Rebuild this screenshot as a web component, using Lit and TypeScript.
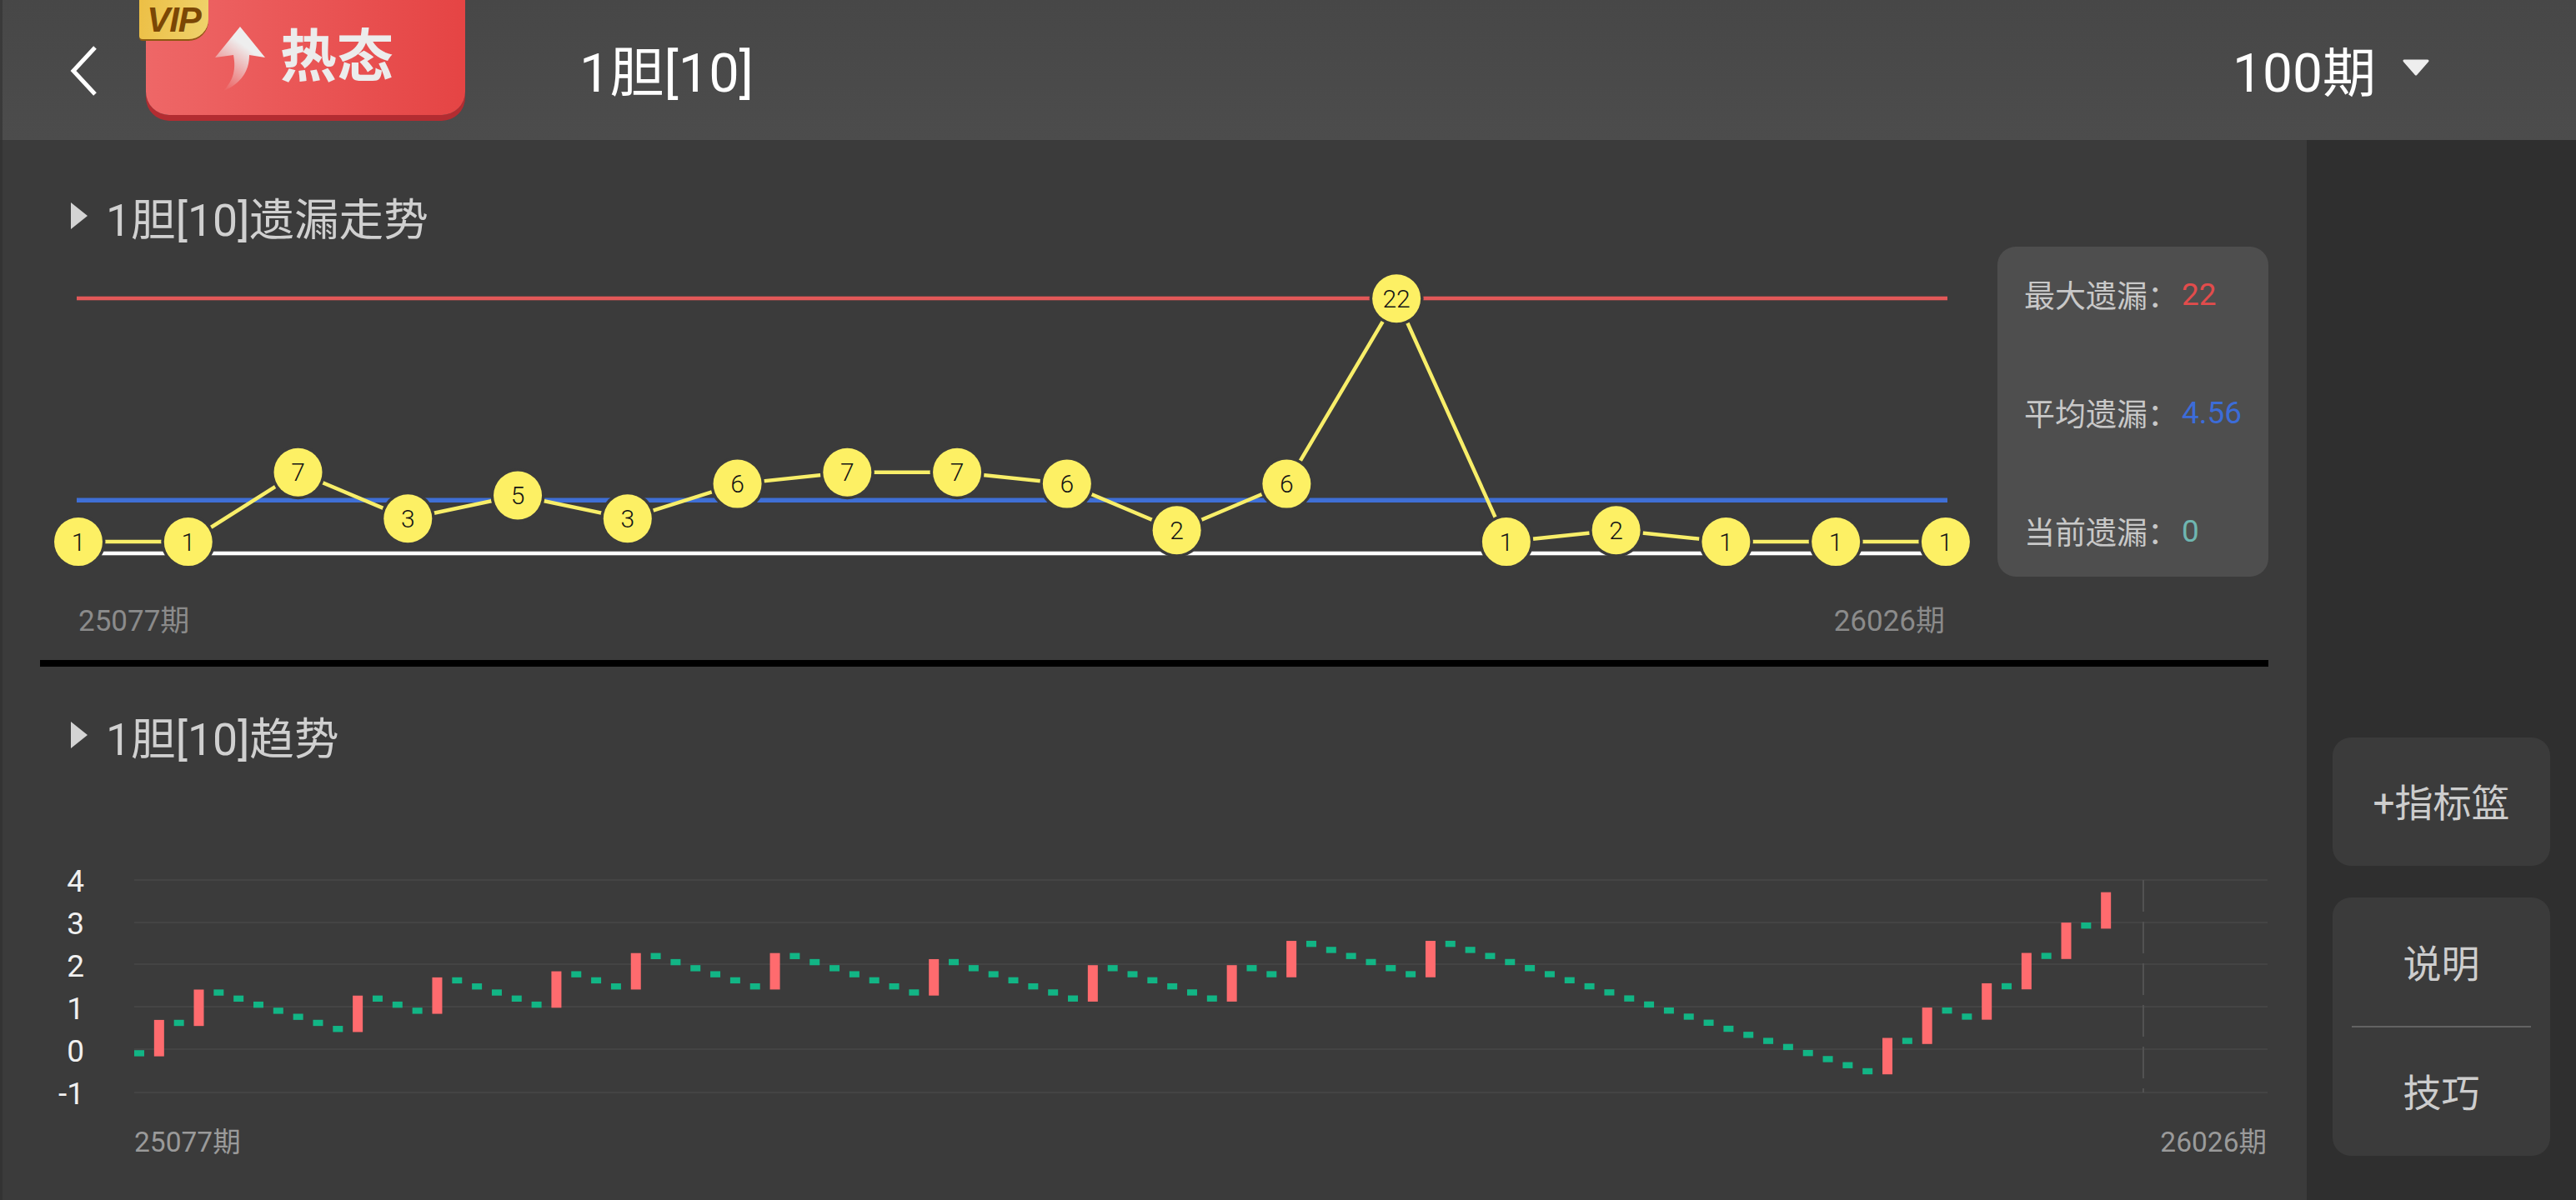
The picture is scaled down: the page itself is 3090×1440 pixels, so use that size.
import { LitElement, html, css, svg } from "lit";
import { customElement } from "lit/decorators.js";

const MISSES = [1, 1, 7, 3, 5, 3, 6, 7, 7, 6, 2, 6, 22, 1, 2, 1, 1, 1];
const HITS = [1, 3, 11, 15, 21, 25, 32, 40, 48, 55, 58, 65, 88, 90, 93, 95, 97, 99];
const nodeX = (i: number) => 94 + i * 131.76;
const nodeY = (v: number) => 664 - 13.9 * v;

function boxes() {
  const out: { x: number; y: number; h: number; hit: boolean }[] = [];
  let bottom = 1267.6;
  for (let i = 0; i < 100; i++) {
    const x = 167 + 23.83 * i;
    if (HITS.includes(i)) {
      out.push({ x, y: bottom - 43.7, h: 43.7, hit: true });
      bottom -= 43.7;
    } else {
      if (i > 0) bottom += 7.28;
      out.push({ x, y: bottom - 7.4, h: 7.4, hit: false });
    }
  }
  return out;
}

@customElement("app-root")
export class AppRoot extends LitElement {
  static styles = css`
    :host {
      display: block;
      width: 3090px;
      height: 1440px;
      overflow: hidden;
      background: #3b3b3b;
      font-family: Roboto, "Noto Sans CJK SC", sans-serif;
    }
    .header {
      height: 168px;
      display: flex;
      align-items: flex-start;
      box-sizing: border-box;
      background: linear-gradient(#474747, #4c4c4c);
      border-left: 3px solid #3a3a3a;
    }
    .back {
      width: 40px;
      height: 60px;
      margin: 55px 0 0 79px;
      flex: none;
    }
    .back path {
      fill: none;
      stroke: #fff;
      stroke-width: 5;
    }
    .hot {
      position: relative;
      flex: none;
      width: 383px;
      height: 138px;
      margin-left: 53px;
      border-radius: 0 0 28px 28px;
      background: linear-gradient(90deg, #ee6767, #e54444);
      box-shadow: 0 7px 0 #b32c31;
      display: flex;
      align-items: flex-start;
    }
    .vip {
      position: absolute;
      left: -8px;
      top: 0;
      width: 83px;
      height: 47px;
      box-sizing: border-box;
      border-radius: 0 0 24px 4px;
      background: linear-gradient(100deg, #ecbf45, #efd26c);
      box-shadow: 0 2px 0 #8f5a12;
      color: #7b4705;
      font: italic 700 42px / 47px "Liberation Sans", sans-serif;
      letter-spacing: -1px;
      text-align: center;
    }
    .arrow {
      width: 70px;
      height: 90px;
      margin: 28px 0 0 78px;
      flex: none;
    }
    .hot-text {
      margin: 24px 0 0 13px;
      font-size: 68px;
      line-height: 90px;
      font-weight: 700;
      color: #ececec;
      white-space: nowrap;
    }
    .title {
      margin: 44px 0 0 137px;
      font-size: 65px;
      line-height: 88px;
      color: #fff;
      white-space: nowrap;
    }
    .range {
      margin: 45px 0 0 auto;
      display: flex;
      align-items: center;
      font-size: 64px;
      line-height: 88px;
      color: #fff;
    }
    .caret {
      width: 34px;
      height: 22px;
      margin: 0 175px 16px 31px;
    }
    .caret path {
      fill: #eee;
      stroke: #eee;
      stroke-width: 3;
      stroke-linejoin: round;
    }
    .body {
      display: flex;
      height: 1272px;
    }
    .main {
      width: 2767px;
      flex: none;
      box-sizing: border-box;
      padding-left: 48px;
      background: #3b3b3b;
      border-left: 3px solid #333;
    }
    .main > * {
      margin-left: -3px;
    }
    .sec-title {
      display: flex;
      align-items: center;
      box-sizing: border-box;
      height: 72px;
      padding-bottom: 2px;
      font-size: 53.6px;
      color: #d0d0d0;
      white-space: nowrap;
    }
    .sec-one {
      margin-top: 56px;
    }
    .sec-two {
      margin-top: 47px;
    }
    .tri {
      width: 20px;
      height: 32px;
      margin: 0 22px 0 37px;
      flex: none;
      fill: #d4d4d4;
    }
    .chart-row {
      display: flex;
    }
    .miss-chart {
      width: 2348px;
      height: 396px;
      flex: none;
      display: block;
      overflow: visible;
    }
    .stats {
      width: 325px;
      height: 396px;
      box-sizing: border-box;
      padding: 27px 0 25px 32px;
      border-radius: 22px;
      background: #4e4e4e;
      display: flex;
      flex-direction: column;
      justify-content: space-between;
      font-size: 37px;
      color: #c8c8c8;
    }
    .stat {
      display: flex;
      height: 60px;
      align-items: center;
      white-space: nowrap;
    }
    .stat span {
      width: 189px;
    }
    .stat .max { color: #e24c4c; }
    .stat .avg { color: #3c6cd8; }
    .stat .cur { color: #6fb6b1; }
    .period {
      display: flex;
      justify-content: space-between;
      color: #8b8b8b;
      font-size: 35px;
      line-height: 40px;
    }
    .period-one {
      width: 2239px;
      margin-top: 34px;
      padding-left: 46px;
    }
    .divider {
      width: 2673px;
      height: 8px;
      margin-top: 26px;
      background: #000;
    }
    .k-chart {
      display: block;
      width: 2673px;
      height: 310px;
      margin-top: 111px;
    }
    .period-two {
      width: 2558px;
      margin-top: 11px;
      padding-left: 113px;
      font-size: 33.5px;
      color: #9a9a9a;
    }
    .side {
      flex: 1;
      background: #2f2f2f;
      display: flex;
      flex-direction: column;
      justify-content: flex-end;
      gap: 38px;
      padding: 0 31px 53px 31px;
    }
    .card {
      border-radius: 22px;
      background: #3b3b3b;
      color: #cdcdcd;
      font-size: 46px;
      text-align: center;
    }
    .row {
      height: 154px;
      line-height: 158px;
      white-space: nowrap;
    }
    .row-low {
      line-height: 160px;
    }
    .rule {
      height: 2px;
      margin: 0 23px;
      background: #626262;
    }
    .conn {
      fill: none;
      stroke: #f8ee69;
      stroke-width: 4.5;
    }
    .ring { fill: #3b3b3b; }
    .dot { fill: #fdf064; }
    .num {
      fill: #151515;
      font-size: 30px;
      font-weight: 300;
      text-anchor: middle;
      dominant-baseline: central;
    }
    .axis {
      fill: #f0f0f0;
      font-size: 37px;
      text-anchor: end;
      dominant-baseline: central;
    }
    .grid {
      stroke: #444;
      stroke-width: 2;
    }
    .vdash {
      stroke: #525252;
      stroke-width: 2;
      stroke-dasharray: 38 12;
    }
    .up { fill: #ff6b6e; }
    .down { fill: #12b585; }
    .val { font-weight: 400; }
  `;

  private missChart() {
    const pts = MISSES.map((v, i) => `${nodeX(i)},${nodeY(v)}`).join(" ");
    return html`<svg class="miss-chart" viewBox="48 296 2348 396">
      <rect x="92" y="355.7" width="2244" height="4.6" fill="#e25858"></rect>
      <rect x="92" y="597.5" width="2244" height="5.5" fill="#3f6fd6"></rect>
      <rect x="92" y="661.7" width="2244" height="4.6" fill="#ffffff"></rect>
      <polyline class="conn" points=${pts}></polyline>
      ${MISSES.map((v, i) => {
        const x = nodeX(i);
        const y = nodeY(v);
        return svg`<circle class="ring" cx=${x} cy=${y} r="32.5"></circle>
          <circle class="dot" cx=${x} cy=${y} r="29"></circle>
          <text class="num" x=${x} y=${y}>${v}</text>`;
      })}
    </svg>`;
  }

  private kChart() {
    const gridY = [1056, 1107, 1157, 1208, 1259, 1311];
    const labels = ["4", "3", "2", "1", "0", "-1"];
    return html`<svg class="k-chart" viewBox="48 1030 2673 310">
      ${gridY.map(
        (y) => svg`<line class="grid" x1="161" x2="2720" y1=${y} y2=${y}></line>`
      )}
      ${labels.map(
        (t, i) => svg`<text class="axis" x="101" y=${1057 + i * 51}>${t}</text>`
      )}
      <line class="vdash" x1="2571" x2="2571" y1="1056" y2="1311"></line>
      ${boxes().map(
        (b) =>
          svg`<rect class=${b.hit ? "up" : "down"} x=${b.x - 6} y=${b.y} width="12" height=${b.h}></rect>`
      )}
    </svg>`;
  }

  render() {
    return html`
      <div class="header">
        <svg class="back" viewBox="0 0 40 60"><path d="M32 2 L6 30 L32 58"></path></svg>
        <div class="hot">
          <div class="vip">VIP</div>
          <svg class="arrow" viewBox="0 0 70 90">
            <defs>
              <linearGradient id="tail" x1="0.6" y1="0.3" x2="0.2" y2="1">
                <stop offset="0" stop-color="#eeeeee"></stop>
                <stop offset="1" stop-color="#eeeeee" stop-opacity="0"></stop>
              </linearGradient>
            </defs>
            <path
              fill="url(#tail)"
              d="M35 4 L65 41 L46 38 C46 58 36 72 14 82 C28 68 30 54 27 38 L5 41 Z"
            ></path>
          </svg>
          <div class="hot-text">热态</div>
        </div>
        <div class="title">1胆[10]</div>
        <div class="range">
          100期
          <svg class="caret" viewBox="0 0 34 22"><path d="M3 3 H31 L17 19 Z"></path></svg>
        </div>
      </div>
      <div class="body">
        <div class="main">
          <div class="sec-title sec-one">
            <svg class="tri" viewBox="0 0 20 32"><path d="M0 0 L20 16 L0 32 Z"></path></svg>
            1胆[10]遗漏走势
          </div>
          <div class="chart-row">
            ${this.missChart()}
            <div class="stats">
              <div class="stat"><span>最大遗漏：</span><b class="val max">22</b></div>
              <div class="stat"><span>平均遗漏：</span><b class="val avg">4.56</b></div>
              <div class="stat"><span>当前遗漏：</span><b class="val cur">0</b></div>
            </div>
          </div>
          <div class="period period-one"><span>25077期</span><span>26026期</span></div>
          <div class="divider"></div>
          <div class="sec-title sec-two">
            <svg class="tri" viewBox="0 0 20 32"><path d="M0 0 L20 16 L0 32 Z"></path></svg>
            1胆[10]趋势
          </div>
          ${this.kChart()}
          <div class="period period-two"><span>25077期</span><span>26026期</span></div>
        </div>
        <div class="side">
          <div class="card"><div class="row">+指标篮</div></div>
          <div class="card">
            <div class="row row-low">说明</div>
            <div class="rule"></div>
            <div class="row">技巧</div>
          </div>
        </div>
      </div>
    `;
  }
}
